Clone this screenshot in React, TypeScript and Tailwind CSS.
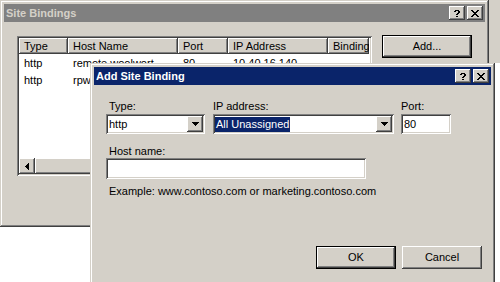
import React from "react";

const FRAME =
  "shadow-[inset_-1px_-1px_#404040,inset_1px_1px_#d4d0c8,inset_-2px_-2px_#808080,inset_2px_2px_#ffffff]";
const BTN =
  "shadow-[inset_-1px_-1px_#404040,inset_1px_1px_#ffffff,inset_-2px_-2px_#808080]";
const BTN_DEF =
  "shadow-[inset_0_0_0_1px_#000000,inset_-2px_-2px_#404040,inset_2px_2px_#ffffff,inset_-3px_-3px_#808080]";
const SUNKEN =
  "shadow-[inset_1px_1px_#808080,inset_-1px_-1px_#ffffff,inset_2px_2px_#404040,inset_-2px_-2px_#d4d0c8]";

function HelpIcon() {
  return (
    <svg width="6" height="7" viewBox="0 0 6 7" shapeRendering="crispEdges">
      <path
        d="M1 0h4v1h-4z M0 1h2v1h-2z M4 1h2v1h-2z M4 2h2v1h-2z M3 3h2v1h-2z M2 4h2v1h-2z M2 6h2v1h-2z"
        fill="#000"
      />
    </svg>
  );
}

function CloseIcon() {
  return (
    <svg width="8" height="7" viewBox="0 0 8 7" shapeRendering="crispEdges">
      <path
        d="M0 0h2v1h-2z M6 0h2v1h-2z M1 1h2v1h-2z M5 1h2v1h-2z M2 2h4v1h-4z M3 3h2v1h-2z M2 4h4v1h-4z M1 5h2v1h-2z M5 5h2v1h-2z M0 6h2v1h-2z M6 6h2v1h-2z"
        fill="#000"
      />
    </svg>
  );
}

function DownArrow() {
  return (
    <svg width="7" height="4" viewBox="0 0 7 4" shapeRendering="crispEdges">
      <path d="M0 0h7v1h-7z M1 1h5v1h-5z M2 2h3v1h-3z M3 3h1v1h-1z" fill="#000" />
    </svg>
  );
}

function LeftArrow() {
  return (
    <svg width="4" height="7" viewBox="0 0 4 7" shapeRendering="crispEdges">
      <path d="M3 0h1v7h-1z M2 1h1v5h-1z M1 2h1v3h-1z M0 3h1v1h-1z" fill="#000" />
    </svg>
  );
}

function CaptionButtons() {
  return (
    <div className="flex items-center gap-[2px] pr-[2px]">
      <div className={`w-[16px] h-[14px] bg-[#d4d0c8] flex items-center justify-center ${BTN}`}>
        <HelpIcon />
      </div>
      <div className={`w-[16px] h-[14px] bg-[#d4d0c8] flex items-center justify-center ${BTN}`}>
        <CloseIcon />
      </div>
    </div>
  );
}

function TitleBar({ title, active }: { title: string; active: boolean }) {
  return (
    <div
      className={`h-[18px] flex items-center justify-between pl-[2px] ${
        active ? "bg-[#0a246a] text-white" : "bg-[#808080] text-[#d4d0c8]"
      }`}
    >
      <span className="font-bold text-[11px] leading-[18px]">{title}</span>
      <CaptionButtons />
    </div>
  );
}

const cols = [
  { name: "Type", w: "w-[49px]" },
  { name: "Host Name", w: "w-[110px]" },
  { name: "Port", w: "w-[50px]" },
  { name: "IP Address", w: "w-[100px]" },
  { name: "Binding", w: "w-[41px]" },
];

const rows = [
  ["http", "remote.woolwort", "80", "10.40.16.140", ""],
  ["http", "rpw", "", "", ""],
];

function SiteBindings() {
  return (
    <div className={`absolute left-0 top-0 w-[489px] h-[227px] bg-[#d4d0c8] p-[4px] flex flex-col ${FRAME}`}>
      <TitleBar title="Site Bindings" active={false} />
      <div className="flex items-start pl-[13px] pt-[14px]">
        <div className={`w-[355px] h-[140px] bg-white p-[2px] flex flex-col ${SUNKEN}`}>
          <div className="flex h-[16px] shrink-0">
            {cols.map((c) => (
              <div
                key={c.name}
                className={`${c.w} h-[16px] pl-[5px] leading-[16px] bg-[#d4d0c8] whitespace-nowrap overflow-hidden ${BTN}`}
              >
                {c.name}
              </div>
            ))}
          </div>
          <div className="mt-[1px] flex flex-col">
            {rows.map((r, i) => (
              <div key={i} className="flex h-[17px]">
                {r.map((cell, j) => (
                  <div
                    key={j}
                    className={`${cols[j].w} pl-[5px] leading-[17px] whitespace-nowrap overflow-hidden`}
                  >
                    {cell}
                  </div>
                ))}
              </div>
            ))}
          </div>
          <div className="flex-1" />
          <div className="h-[16px] flex bg-[#ece9e2]">
            <div className={`w-[16px] h-[16px] bg-[#d4d0c8] flex items-center justify-center ${BTN}`}>
              <LeftArrow />
            </div>
            <div className={`w-[220px] h-[16px] bg-[#d4d0c8] ${BTN}`} />
          </div>
        </div>
        <div
          className={`ml-[10px] -mt-px w-[90px] h-[23px] bg-[#d4d0c8] flex items-center justify-center ${BTN_DEF}`}
        >
          Add...
        </div>
      </div>
    </div>
  );
}

function AddSiteBinding() {
  return (
    <div className={`absolute left-[90px] top-[63px] w-[405px] h-[240px] bg-[#d4d0c8] p-[4px] flex flex-col ${FRAME}`}>
      <TitleBar title="Add Site Binding" active={true} />
      <div className="flex flex-col pl-[12px] pt-[15px]">
        <div className="flex">
          <div className="w-[99px] flex flex-col">
            <div className="h-[13px] leading-[13px] pl-[3px]">Type:</div>
            <div className={`mt-[1px] h-[20px] bg-white flex items-center p-[2px] ${SUNKEN}`}>
              <span className="flex-1 pl-[1px] leading-[16px]">http</span>
              <div className={`w-[16px] h-[16px] bg-[#d4d0c8] flex items-center justify-center ${BTN}`}>
                <DownArrow />
              </div>
            </div>
          </div>
          <div className="ml-[8px] w-[181px] flex flex-col">
            <div className="h-[13px] leading-[13px]">IP address:</div>
            <div className={`mt-[1px] h-[20px] bg-white flex items-center p-[2px] ${SUNKEN}`}>
              <div className="flex-1 flex">
                <span className="bg-[#0a246a] text-white px-[1px] leading-[15px]">All Unassigned</span>
              </div>
              <div className={`w-[16px] h-[16px] bg-[#d4d0c8] flex items-center justify-center ${BTN}`}>
                <DownArrow />
              </div>
            </div>
          </div>
          <div className="ml-[7px] w-[50px] flex flex-col">
            <div className="h-[13px] leading-[13px]">Port:</div>
            <div className={`mt-[1px] h-[20px] bg-white flex items-center p-[2px] ${SUNKEN}`}>
              <span className="pl-[1px] leading-[16px]">80</span>
            </div>
          </div>
        </div>
        <div className="mt-[11px] h-[13px] leading-[13px] pl-[3px]">Host name:</div>
        <div className={`w-[260px] h-[21px] bg-white ${SUNKEN}`} />
        <div className="mt-[6px] h-[13px] leading-[13px] pl-[3px]">
          Example: www.contoso.com or marketing.contoso.com
        </div>
        <div className="mt-[48px] flex justify-end gap-[6px] pr-[9px]">
          <div className={`w-[80px] h-[23px] bg-[#d4d0c8] flex items-center justify-center ${BTN_DEF}`}>OK</div>
          <div className={`w-[80px] h-[23px] bg-[#d4d0c8] flex items-center justify-center ${BTN}`}>Cancel</div>
        </div>
      </div>
    </div>
  );
}

export default function App() {
  return (
    <div className="relative w-[500px] h-[282px] overflow-hidden bg-white text-black text-[11px] font-['Liberation_Sans',Arial,sans-serif]">
      <div className="absolute left-[489px] top-0 w-[11px] h-[63px] bg-[#d4d0c8]" />
      <SiteBindings />
      <AddSiteBinding />
    </div>
  );
}
